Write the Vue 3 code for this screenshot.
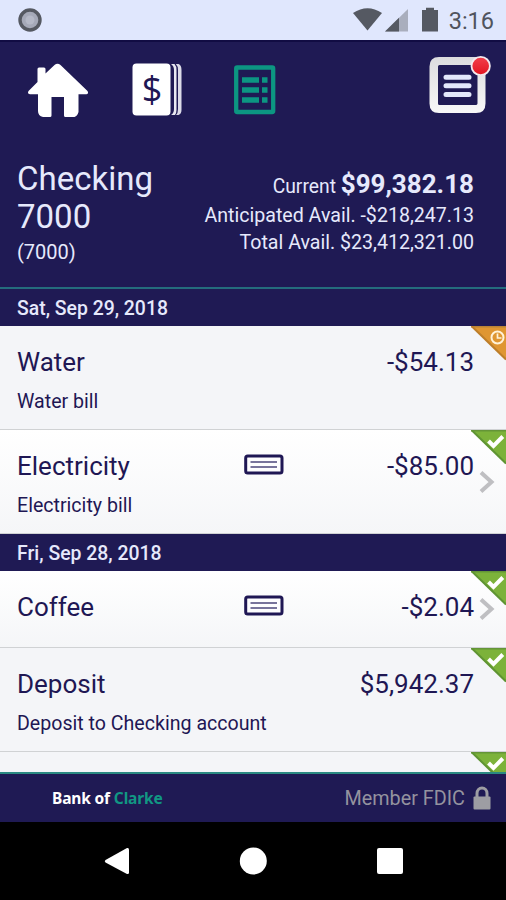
<script setup>
const groups = [
  {
    date: 'Sat, Sep 29, 2018',
    items: [
      { name: 'Water', note: 'Water bill', amount: '-$54.13', status: 'pending' },
      { name: 'Electricity', note: 'Electricity bill', amount: '-$85.00', status: 'cleared', check: true, more: true }
    ]
  },
  {
    date: 'Fri, Sep 28, 2018',
    items: [
      { name: 'Coffee', amount: '-$2.04', status: 'cleared', check: true, more: true },
      { name: 'Deposit', note: 'Deposit to Checking account', amount: '$5,942.37', status: 'cleared' },
      { name: '', amount: '', status: 'cleared' }
    ]
  }
]
</script>

<template>
  <div class="screen">
    <div class="status">
      <svg class="record" width="26" height="26" viewBox="0 0 26 26">
        <circle cx="13" cy="13" r="10" fill="#a5a9b8" stroke="#555962" stroke-width="3.4" />
        <circle cx="13" cy="13" r="4.5" fill="#b5b9c7" />
      </svg>
      <div class="tray">
        <svg width="86" height="26" viewBox="0 0 86 26">
          <path d="M0 6Q14.500 -3.500 29 6L14.500 23.500Z" fill="#555962" />
          <path d="M32 24.500L55 2V24.500Z" fill="#a9aebd" />
          <path d="M32 24.500L46 10.800V24.500Z" fill="#555962" />
          <path d="M69 3h4V0.800h8V3h4v21.500H69Z" fill="#555962" />
        </svg>
        <span class="clock">3:16</span>
      </div>
    </div>

    <header class="header">
      <nav class="tabs">
        <svg class="home" width="62" height="56" viewBox="0 0 62 56">
          <path d="M10.500 6q0-1.500 1.500-1.500h5q1.500 0 1.500 1.500v4.500L27.500 2Q30.500 -0.700 33.500 2L60.500 28Q62 31 59.500 31.300H51.500V49q-1 4-4 5H38.500q-1.500 0-1.500-1.500V34h-12.500v18.500q0 1.500-1.500 1.500H16q-5-1-5-6V31.300H3Q0 31 1.500 28L10.500 19Z" fill="#fff" />
        </svg>
        <svg class="checks" width="52" height="56" viewBox="0 0 52 56">
          <rect x="0.500" y="1.500" width="38" height="52" rx="4" fill="#fff" />
          <path d="M39 2q3 2 3 6v39q0 4-3 6h4q1.500-2 1.500-5V8q0-4-2-6Z" fill="#e9e9f2" />
          <path d="M43.800 2q2.200 2 2.200 6v39q0 4-2 6h2.500q3-1 3-5V8q0-5-3-6Z" fill="#dcdbe8" />
          <text x="20" y="39.500" text-anchor="middle" class="dollar">$</text>
        </svg>
        <svg class="register" width="42" height="50" viewBox="0 0 42 50">
          <rect x="2.200" y="2.500" width="37" height="44.500" rx="1" fill="none" stroke="#0c9682" stroke-width="4.300" />
          <path d="M8 15h17M8 25h17M8 35h17M28 15h5.500M28 25h5.500M28 35h5.500" stroke="#0c9682" stroke-width="5.400" />
        </svg>
        <svg class="menu" width="64" height="62" viewBox="0 0 64 62">
          <defs>
            <linearGradient id="frame" x2="0" y2="1"><stop stop-color="#dcdcde" /><stop offset="1" stop-color="#f8f8f8" /></linearGradient>
            <linearGradient id="alert" x2="0" y2="1"><stop stop-color="#f2404c" /><stop offset="1" stop-color="#e3131f" /></linearGradient>
          </defs>
          <path fill-rule="evenodd" d="M11 3H48Q57.500 3 57.500 12.500V49.500Q57.500 59 48 59H11Q1.500 59 1.500 49.500V12.500Q1.500 3 11 3ZM11.500 11Q10 11 10 12.500V49.500Q10 51 11.500 51H47.500Q49.500 51 49.500 49.500V12.500Q49.500 11 47.500 11Z" fill="url(#frame)" />
          <path d="M18 23.300h23M18 31.800h23M18 40.500h23" stroke="#e3e8fb" stroke-width="5" stroke-linecap="round" />
          <circle cx="52.700" cy="12" r="9.200" fill="url(#alert)" stroke="#f3e9ee" stroke-width="1.800" />
        </svg>
      </nav>
      <div class="summary">
        <div class="account">
          <div class="title">Checking<br>7000</div>
          <div class="number">(7000)</div>
        </div>
        <div class="balances">
          <div class="current"><span>Current&nbsp;</span><strong>$99,382.18</strong></div>
          <div>Anticipated Avail. -$218,247.13</div>
          <div>Total Avail. $23,412,321.00</div>
        </div>
      </div>
    </header>

    <main class="list">
      <section v-for="group in groups" :key="group.date">
        <h2 class="date">{{ group.date }}</h2>
        <article
          v-for="(item, i) in group.items"
          :key="i"
          class="row"
          :class="{ short: !item.note, raised: item.more }"
        >
          <div class="info">
            <div class="name">{{ item.name }}</div>
            <div v-if="item.note" class="note">{{ item.note }}</div>
          </div>
          <svg v-if="item.check" class="slip" width="40" height="22" viewBox="0 0 40 22">
            <rect x="1.700" y="2" width="36.300" height="17" rx="2" fill="#fdfdfe" stroke="#1f1754" stroke-width="3" />
            <path d="M6.500 8h26.500M6.500 13h26.500" stroke="#77739b" stroke-width="1.900" />
          </svg>
          <div class="amount">{{ item.amount }}</div>
          <svg v-if="item.more" class="chevron" width="16" height="24" viewBox="0 0 16 24">
            <path d="M2 2.500L12.500 12L2 21.500" fill="none" stroke="#bfbfc2" stroke-width="4" />
          </svg>
          <svg class="flag" width="35" height="35" viewBox="0 0 35 35">
            <template v-if="item.status === 'pending'">
              <path d="M0 0H35V34Z" fill="#df9632" />
              <path d="M0 0.800H35" stroke="#b98336" stroke-width="1.600" />
              <path d="M1 0.500L35 33.500" stroke="#bd7e2a" stroke-width="2" />
              <circle cx="26.500" cy="11.500" r="6" fill="none" stroke="#fff2d8" stroke-width="2" />
              <path d="M26.500 7.500V12H30.500" fill="none" stroke="#fff2d8" stroke-width="1.700" />
            </template>
            <template v-else>
              <path d="M0 0H35V34Z" fill="#7cb23a" />
              <path d="M0 0.800H35" stroke="#649537" stroke-width="1.600" />
              <path d="M1 0.500L35 33.500" stroke="#5f9433" stroke-width="2" />
              <path d="M17.500 11L22.500 16L31.800 6.500" fill="none" stroke="#fff" stroke-width="4" />
            </template>
          </svg>
        </article>
      </section>
    </main>

    <footer class="footer">
      <div class="brand">Bank of <span>Clarke</span></div>
      <div class="member">
        Member FDIC
        <svg width="18" height="24" viewBox="0 0 18 24">
          <path d="M4 12V7.500a5 5.500 0 0 1 10 0V12" fill="none" stroke="#9d9da3" stroke-width="3" />
          <rect x="0.500" y="10.500" width="17" height="13" rx="1" fill="#9d9da3" />
        </svg>
      </div>
    </footer>

    <div class="system">
      <svg width="26" height="28" viewBox="0 0 26 28"><path d="M2.500 13L24 1q2-0.500 2 1.500v23q0 2-2 1.500L2.500 15.500Q1 14.200 2.500 13Z" fill="#fff" /></svg>
      <svg width="28" height="28" viewBox="0 0 28 28"><circle cx="14.300" cy="14" r="13.500" fill="#fff" /></svg>
      <svg width="26" height="26" viewBox="0 0 26 26"><rect width="26" height="26" rx="2" fill="#fff" /></svg>
    </div>
  </div>
</template>

<style>
body {
  margin: 0;
}
</style>

<style scoped>
.screen {
  display: flex;
  flex-direction: column;
  width: 506px;
  height: 900px;
  overflow: hidden;
  background: #1f1a54;
  color: #e6e9fc;
  font-family: Roboto, "Liberation Sans", sans-serif;
  font-size: 19.6px;
}
svg {
  display: block;
  flex: none;
}
.status {
  box-sizing: border-box;
  flex: none;
  display: flex;
  justify-content: space-between;
  height: 40px;
  padding: 7px 12px 0 17px;
  background: #e0e7fd;
}
.tray {
  display: flex;
  gap: 10px;
}
.clock {
  font-size: 23.5px;
  line-height: 28px;
  color: #50545e;
}
.header {
  box-sizing: border-box;
  flex: none;
  height: 249px;
  border-top: 2px solid #110c43;
  border-bottom: 2px solid #246c7d;
}
.tabs {
  display: flex;
  align-items: flex-start;
  height: 118px;
  padding: 12px 14px 0 27px;
  box-sizing: border-box;
}
.home {
  margin-top: 9px;
}
.checks {
  margin: 8px 0 0 43px;
}
.dollar {
  font-family: "Open Sans", sans-serif;
  font-size: 36px;
  fill: #1f1754;
}
.register {
  margin: 11px 0 0 50px;
}
.menu {
  margin-left: auto;
}
.summary {
  display: flex;
  justify-content: space-between;
  padding: 0 32px 0 17px;
}
.title {
  font-size: 33px;
  line-height: 38px;
}
.number {
  margin-top: 4px;
  font-size: 20px;
  line-height: 24px;
}
.balances {
  padding-top: 8px;
  line-height: 27px;
  text-align: right;
  white-space: nowrap;
}
.current {
  display: flex;
  align-items: baseline;
  justify-content: flex-end;
  height: 34px;
  line-height: 33px;
}
.current span {
  font-size: 19.3px;
}
.current strong {
  font-size: 26px;
}
.list {
  flex: none;
  height: 483px;
  overflow: hidden;
}
.date {
  margin: 0;
  height: 37px;
  padding-left: 17px;
  background: #1f1a54;
  font-size: 19.4px;
  font-weight: 500;
  line-height: 40px;
}
.row {
  position: relative;
  box-sizing: border-box;
  display: flex;
  height: 104px;
  padding: 21px 32px 0 17px;
  border-bottom: 1px solid #d0d2d4;
  background: #f4f5f8;
  color: #1f1754;
}
.row.raised {
  background: linear-gradient(#fff, #f5f6f8);
}
.row.short {
  height: 77px;
}
.name,
.amount {
  font-size: 26px;
  line-height: 30px;
}
.amount {
  margin-left: auto;
}
.note {
  margin-top: 13px;
  line-height: 24px;
  white-space: nowrap;
}
.slip {
  position: absolute;
  left: 244px;
  top: 24px;
}
.chevron {
  position: absolute;
  right: 11px;
  top: 50%;
  transform: translateY(-50%);
}
.flag {
  position: absolute;
  right: 0;
  top: 0;
}
.footer {
  box-sizing: border-box;
  flex: none;
  display: flex;
  align-items: center;
  justify-content: space-between;
  height: 50px;
  padding: 0 15px 0 52px;
  border-top: 2px solid #2a8982;
}
.brand {
  color: #fff;
  font-family: "Noto Sans", sans-serif;
  font-size: 15.5px;
  font-weight: 700;
  letter-spacing: -0.15px;
}
.brand span {
  color: #119783;
}
.member {
  display: flex;
  align-items: center;
  gap: 8px;
  color: #94939f;
  font-size: 19.8px;
}
.system {
  flex: 1;
  display: flex;
  align-items: center;
  justify-content: center;
  gap: 110px;
  background: #000;
}
</style>
